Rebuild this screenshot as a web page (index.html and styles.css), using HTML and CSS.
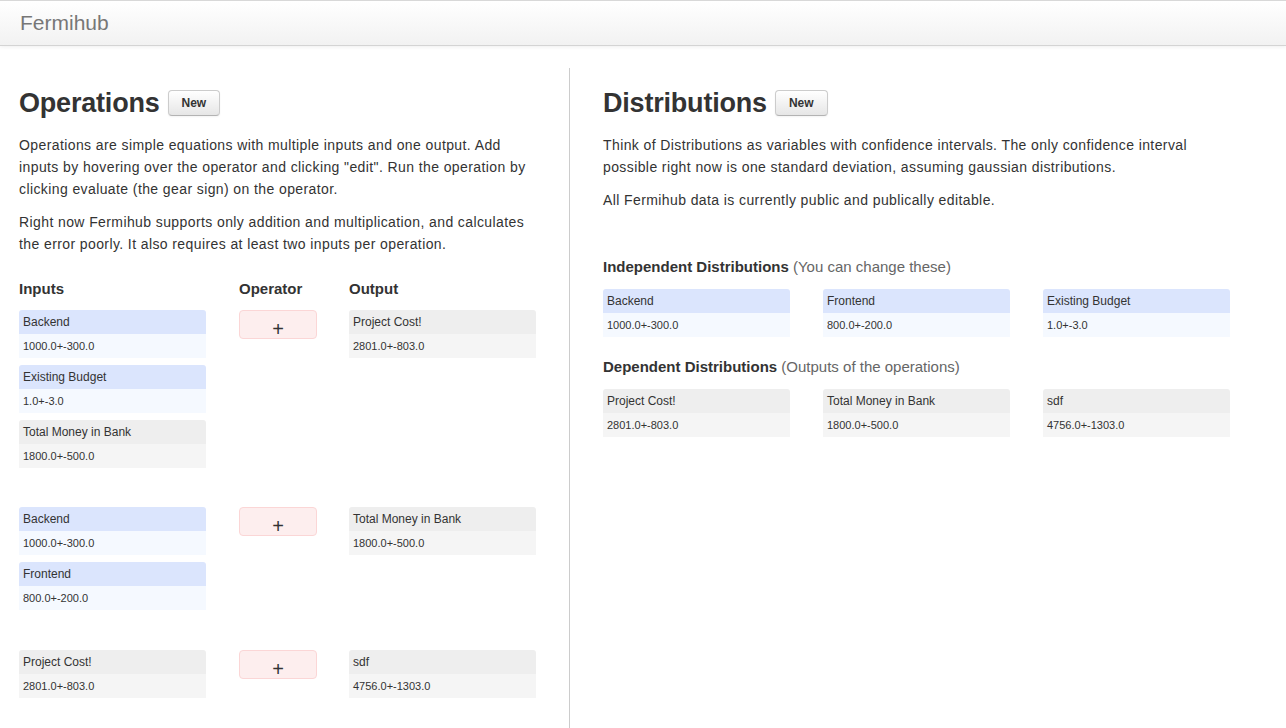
FILE: index.html
```html
<!DOCTYPE html>
<html>
<head>
<meta charset="utf-8">
<title>Fermihub</title>
<link rel="stylesheet" href="styles.css">
</head>
<body>
<div class="navbar">
  <a class="brand">Fermihub</a>
</div>
<div class="main">
  <div class="col col-left">
    <div class="title-row">
      <h1>Operations</h1>
      <button class="btn">New</button>
    </div>
    <p>Operations are simple equations with multiple inputs and one output. Add inputs by hovering over the operator and clicking "edit". Run the operation by clicking evaluate (the gear sign) on the operator.</p>
    <p>Right now Fermihub supports only addition and multiplication, and calculates the error poorly. It also requires at least two inputs per operation.</p>

    <div class="op-grid op-head">
      <div class="col-title">Inputs</div>
      <div class="col-title">Operator</div>
      <div class="col-title">Output</div>
    </div>

    <div class="op-grid op-group">
      <div class="inputs">
        <div class="card blue"><div class="card-h">Backend</div><div class="card-b">1000.0+-300.0</div></div>
        <div class="card blue"><div class="card-h">Existing Budget</div><div class="card-b">1.0+-3.0</div></div>
        <div class="card gray"><div class="card-h">Total Money in Bank</div><div class="card-b">1800.0+-500.0</div></div>
      </div>
      <div class="operator"><div class="op-box">+</div></div>
      <div class="output">
        <div class="card gray"><div class="card-h">Project Cost!</div><div class="card-b">2801.0+-803.0</div></div>
      </div>
    </div>

    <div class="op-grid op-group">
      <div class="inputs">
        <div class="card blue"><div class="card-h">Backend</div><div class="card-b">1000.0+-300.0</div></div>
        <div class="card blue"><div class="card-h">Frontend</div><div class="card-b">800.0+-200.0</div></div>
      </div>
      <div class="operator"><div class="op-box">+</div></div>
      <div class="output">
        <div class="card gray"><div class="card-h">Total Money in Bank</div><div class="card-b">1800.0+-500.0</div></div>
      </div>
    </div>

    <div class="op-grid op-group">
      <div class="inputs">
        <div class="card gray"><div class="card-h">Project Cost!</div><div class="card-b">2801.0+-803.0</div></div>
      </div>
      <div class="operator"><div class="op-box">+</div></div>
      <div class="output">
        <div class="card gray"><div class="card-h">sdf</div><div class="card-b">4756.0+-1303.0</div></div>
      </div>
    </div>
  </div>

  <div class="col col-right">
    <div class="title-row">
      <h1>Distributions</h1>
      <button class="btn">New</button>
    </div>
    <p>Think of Distributions as variables with confidence intervals. The only confidence interval possible right now is one standard deviation, assuming gaussian distributions.</p>
    <p>All Fermihub data is currently public and publically editable.</p>

    <h3 class="dist-title first">Independent Distributions <span class="sub">(You can change these)</span></h3>
    <div class="dist-grid">
      <div class="card blue"><div class="card-h">Backend</div><div class="card-b">1000.0+-300.0</div></div>
      <div class="card blue"><div class="card-h">Frontend</div><div class="card-b">800.0+-200.0</div></div>
      <div class="card blue"><div class="card-h">Existing Budget</div><div class="card-b">1.0+-3.0</div></div>
    </div>

    <h3 class="dist-title">Dependent Distributions <span class="sub">(Outputs of the operations)</span></h3>
    <div class="dist-grid">
      <div class="card gray"><div class="card-h">Project Cost!</div><div class="card-b">2801.0+-803.0</div></div>
      <div class="card gray"><div class="card-h">Total Money in Bank</div><div class="card-b">1800.0+-500.0</div></div>
      <div class="card gray"><div class="card-h">sdf</div><div class="card-b">4756.0+-1303.0</div></div>
    </div>
  </div>
</div>
</body>
</html>
```
FILE: styles.css
```css
html, body {
  margin: 0;
  padding: 0;
  background: #fff;
}
body {
  font-family: "Liberation Sans", Arial, Helvetica, sans-serif;
  font-size: 14px;
  line-height: 22px;
  color: #333;
  height: 728px;
  overflow: hidden;
}
.navbar {
  border-top: 1px solid #d8d8d8;
  border-bottom: 1px solid #d4d4d4;
  background: linear-gradient(to bottom, #ffffff, #f2f2f2);
  box-shadow: 0 1px 4px rgba(0,0,0,0.065);
  box-sizing: border-box;
  height: 46px;
  display: flex;
  align-items: center;
}
.brand {
  margin-left: 20px;
  font-size: 21px;
  color: #777;
  font-weight: normal;
}
.main {
  display: flex;
  margin-top: 22px;
  height: 660px;
}
.col-left {
  width: 520px;
  padding: 0 30px 0 19px;
}
.col-right {
  width: 627px;
  border-left: 1px solid #cccccc;
  padding: 0 0 0 33px;
}
.title-row {
  display: flex;
  align-items: center;
  height: 40px;
  margin: 15px 0 11px;
}
h1 {
  margin: 0;
  font-size: 27px;
  font-weight: bold;
  color: #333;
  line-height: 40px;
  letter-spacing: -0.2px;
}
.btn {
  margin-left: 8px;
  font-family: "Liberation Sans", Arial, sans-serif;
  font-size: 12px;
  font-weight: bold;
  color: #333;
  height: 26px;
  padding: 0 13px;
  border: 1px solid #cccccc;
  border-bottom-color: #b3b3b3;
  border-radius: 4px;
  background: linear-gradient(to bottom, #ffffff, #e6e6e6);
  box-shadow: inset 0 1px 0 rgba(255,255,255,.2), 0 1px 2px rgba(0,0,0,.05);
}
p {
  margin: 0 0 11px;
  letter-spacing: 0.4px;
}
.op-grid {
  display: grid;
  grid-template-columns: 220px 110px 187px;
}
.op-head {
  margin-top: 23px;
  margin-bottom: 10px;
}
.col-title {
  font-size: 15px;
  font-weight: bold;
  color: #333;
}
.op-group {
  margin-bottom: 32px;
}
.op-group + .op-group {
  margin-bottom: 33px;
}
.inputs .card, .output .card {
  width: 187px;
}
.card {
  margin-bottom: 7px;
  border-radius: 3px 3px 0 0;
  overflow: hidden;
}
.card-h {
  height: 24px;
  line-height: 24px;
  font-size: 12px;
  padding-left: 4px;
  color: #333;
}
.card-b {
  height: 24px;
  line-height: 24px;
  font-size: 11px;
  padding-left: 4px;
  color: #333;
}
.blue .card-h { background: #dbe5fd; }
.blue .card-b { background: #f5f9ff; }
.gray .card-h { background: #eeeeee; }
.gray .card-b { background: #f5f5f5; }
.op-box {
  box-sizing: border-box;
  width: 78px;
  height: 29px;
  padding-top: 9px;
  border: 1px solid #fbd6d6;
  background: #fdeeee;
  border-radius: 4px;
  text-align: center;
  font-size: 20px;
  line-height: 18px;
  color: #333;
}
.dist-title {
  margin: 0 0 11px;
  font-size: 15px;
  font-weight: bold;
  line-height: 22px;
  color: #333;
}
.dist-title.first {
  margin-top: 45px;
}
.dist-title .sub {
  font-weight: normal;
  color: #666;
}
.dist-grid {
  display: grid;
  grid-template-columns: repeat(3, 187px);
  column-gap: 33px;
  margin-bottom: 12px;
}
.dist-grid .card {
  margin-bottom: 7px;
}
```
